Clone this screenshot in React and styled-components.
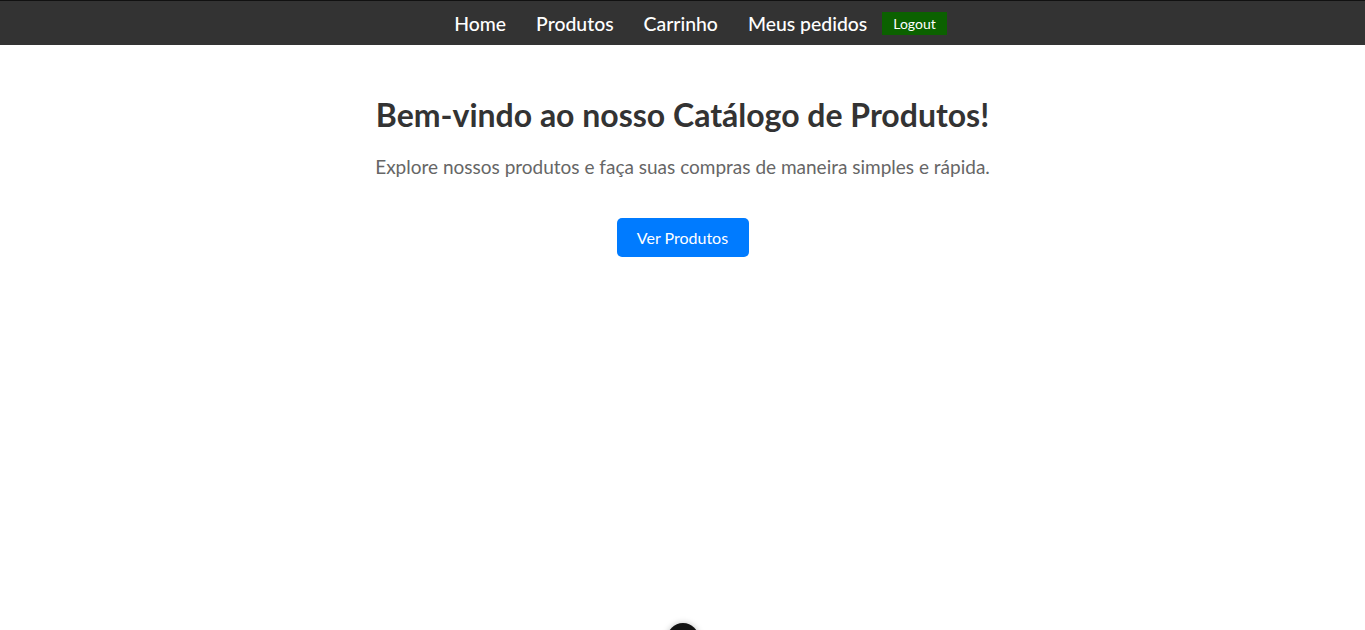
import React from 'react';
import styled, { createGlobalStyle } from 'styled-components';

const GlobalStyle = createGlobalStyle`
  body {
    margin: 0;
    font-family: Lato, "Noto Sans", sans-serif;
    background: #fff;
    overflow: hidden;
  }
`;

const Navbar = styled.nav`
  height: 44px;
  background: #333;
  border-top: 1px solid #111;
  display: flex;
  justify-content: center;
  align-items: center;
  gap: 30px;
  padding-left: 36px;
`;

const NavLink = styled.a`
  color: #fff;
  font-size: 19.4px;
  font-weight: 500;
  text-decoration: none;
  cursor: pointer;
`;

const LogoutButton = styled.button`
  margin-left: -15px;
  background: #0b6100;
  color: #fff;
  border: none;
  font-family: inherit;
  font-size: 14px;
  padding: 0 11px;
  height: 23px;
  cursor: pointer;
`;

const Hero = styled.main`
  height: 578px;
  display: flex;
  flex-direction: column;
  align-items: center;
  padding-top: 50px;
  box-sizing: border-box;
`;

const Title = styled.h1`
  margin: 0;
  font-size: 32px;
  font-weight: 700;
  color: #333;
  line-height: 40px;
`;

const Subtitle = styled.p`
  margin: 20px 0 0;
  font-size: 19px;
  line-height: 23px;
  color: #666;
`;

const PrimaryButton = styled.button`
  margin-top: 40px;
  background: #007bff;
  color: #fff;
  border: none;
  border-radius: 5px;
  font-family: inherit;
  font-size: 16px;
  width: 132px;
  height: 39px;
  cursor: pointer;
`;

const Footer = styled.footer`
  display: flex;
  justify-content: center;
`;

const RoundButton = styled.div`
  width: 32px;
  height: 32px;
  border-radius: 50%;
  background: #111;
  box-shadow: 0 0 6px rgba(0, 0, 0, 0.25);
`;

export default function App() {
  return (
    <>
      <GlobalStyle />
      <Navbar>
        <NavLink>Home</NavLink>
        <NavLink>Produtos</NavLink>
        <NavLink>Carrinho</NavLink>
        <NavLink>Meus pedidos</NavLink>
        <LogoutButton>Logout</LogoutButton>
      </Navbar>
      <Hero>
        <Title>Bem-vindo ao nosso Catálogo de Produtos!</Title>
        <Subtitle>Explore nossos produtos e faça suas compras de maneira simples e rápida.</Subtitle>
        <PrimaryButton>Ver Produtos</PrimaryButton>
      </Hero>
      <Footer>
        <RoundButton />
      </Footer>
    </>
  );
}
